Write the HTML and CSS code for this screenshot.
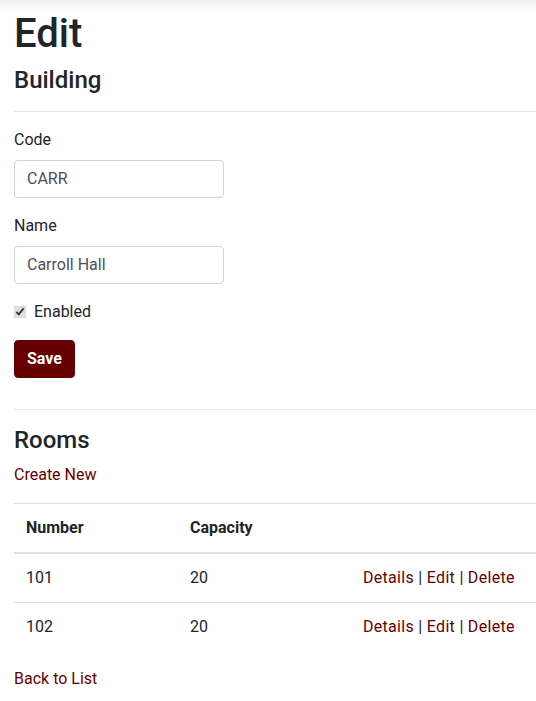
FILE: index.html
```html
<!DOCTYPE html>
<html lang="en">
<head>
<meta charset="utf-8">
<title>Edit Building</title>
<link rel="stylesheet" href="styles.css">
</head>
<body>
<div class="topbar"></div>
<main class="page">
  <h1 class="title">Edit</h1>
  <h4 class="subtitle">Building</h4>
  <hr class="rule">
  <form class="form">
    <div class="group">
      <label class="label" for="code">Code</label>
      <input class="input" id="code" type="text" value="CARR">
    </div>
    <div class="group">
      <label class="label" for="name">Name</label>
      <input class="input" id="name" type="text" value="Carroll Hall">
    </div>
    <div class="group check">
      <input class="checkbox" id="enabled" type="checkbox" checked>
      <label class="check-label" for="enabled">Enabled</label>
    </div>
    <div class="group last">
      <button class="btn" type="button">Save</button>
    </div>
  </form>
  <hr class="rule">
  <h4 class="subtitle">Rooms</h4>
  <p class="para"><a class="link" href="#">Create New</a></p>
  <table class="table">
    <thead>
      <tr>
        <th class="col-num">Number</th>
        <th class="col-cap">Capacity</th>
        <th></th>
      </tr>
    </thead>
    <tbody>
      <tr>
        <td>101</td>
        <td>20</td>
        <td><a class="link" href="#">Details</a> | <a class="link" href="#">Edit</a> | <a class="link" href="#">Delete</a></td>
      </tr>
      <tr>
        <td>102</td>
        <td>20</td>
        <td><a class="link" href="#">Details</a> | <a class="link" href="#">Edit</a> | <a class="link" href="#">Delete</a></td>
      </tr>
    </tbody>
  </table>
  <div class="back"><a class="link" href="#">Back to List</a></div>
</main>
</body>
</html>
```

FILE: styles.css
```css
html, body {
  margin: 0;
  padding: 0;
  background: #fff;
}
body {
  font-family: Roboto, "Liberation Sans", sans-serif;
  font-size: 16px;
  line-height: 1.5;
  color: #212529;
  overflow-x: hidden;
}
.topbar {
  height: 10px;
  background: linear-gradient(#f0f0f0, #ffffff);
}
.page {
  padding: 0 0 0 14px;
}
.title {
  margin: 0;
  font-size: 40px;
  line-height: 48px;
  font-weight: 500;
}
.subtitle {
  margin: 8px 0 8px 0;
  font-size: 24px;
  line-height: 28.8px;
  font-weight: 500;
}
.rule {
  margin: 16px 0;
  border: 0;
  border-top: 1px solid #e5e5e5;
}
.form {
  padding-bottom: 15px;
}
.group {
  margin-bottom: 16px;
}
.group.last {
  margin-bottom: 0;
}
.label {
  display: block;
  margin-bottom: 8px;
}
.input {
  display: block;
  box-sizing: border-box;
  width: 210px;
  height: 38px;
  padding: 6px 12px;
  font: inherit;
  color: #495057;
  border: 1px solid #ced4da;
  border-radius: 4px;
  background: #fff;
}
.check {
  display: flex;
  align-items: center;
  gap: 8px;
}
.checkbox {
  margin: 0;
  width: 12px;
  height: 12px;
  accent-color: #dedede;
}
.btn {
  font: inherit;
  font-weight: 700;
  color: #fff;
  background: #660000;
  border: 1px solid #660000;
  border-radius: 4px;
  padding: 6px 12px;
  height: 38px;
}
.para {
  margin: 0 0 16px 0;
}
.link {
  color: #660000;
  text-decoration: none;
}
.table {
  width: 522px;
  border-collapse: collapse;
  margin-bottom: 16px;
}
.table th,
.table td {
  padding: 12px;
  text-align: left;
  border-top: 1px solid #dee2e6;
  vertical-align: top;
}
.table th {
  font-weight: 700;
  border-bottom: 2px solid #dee2e6;
}
.table td:last-child {
  letter-spacing: 0.3px;
}
.col-num { width: 140px; }
.col-cap { width: 149px; }
.back {
  margin: 0;
}
```
